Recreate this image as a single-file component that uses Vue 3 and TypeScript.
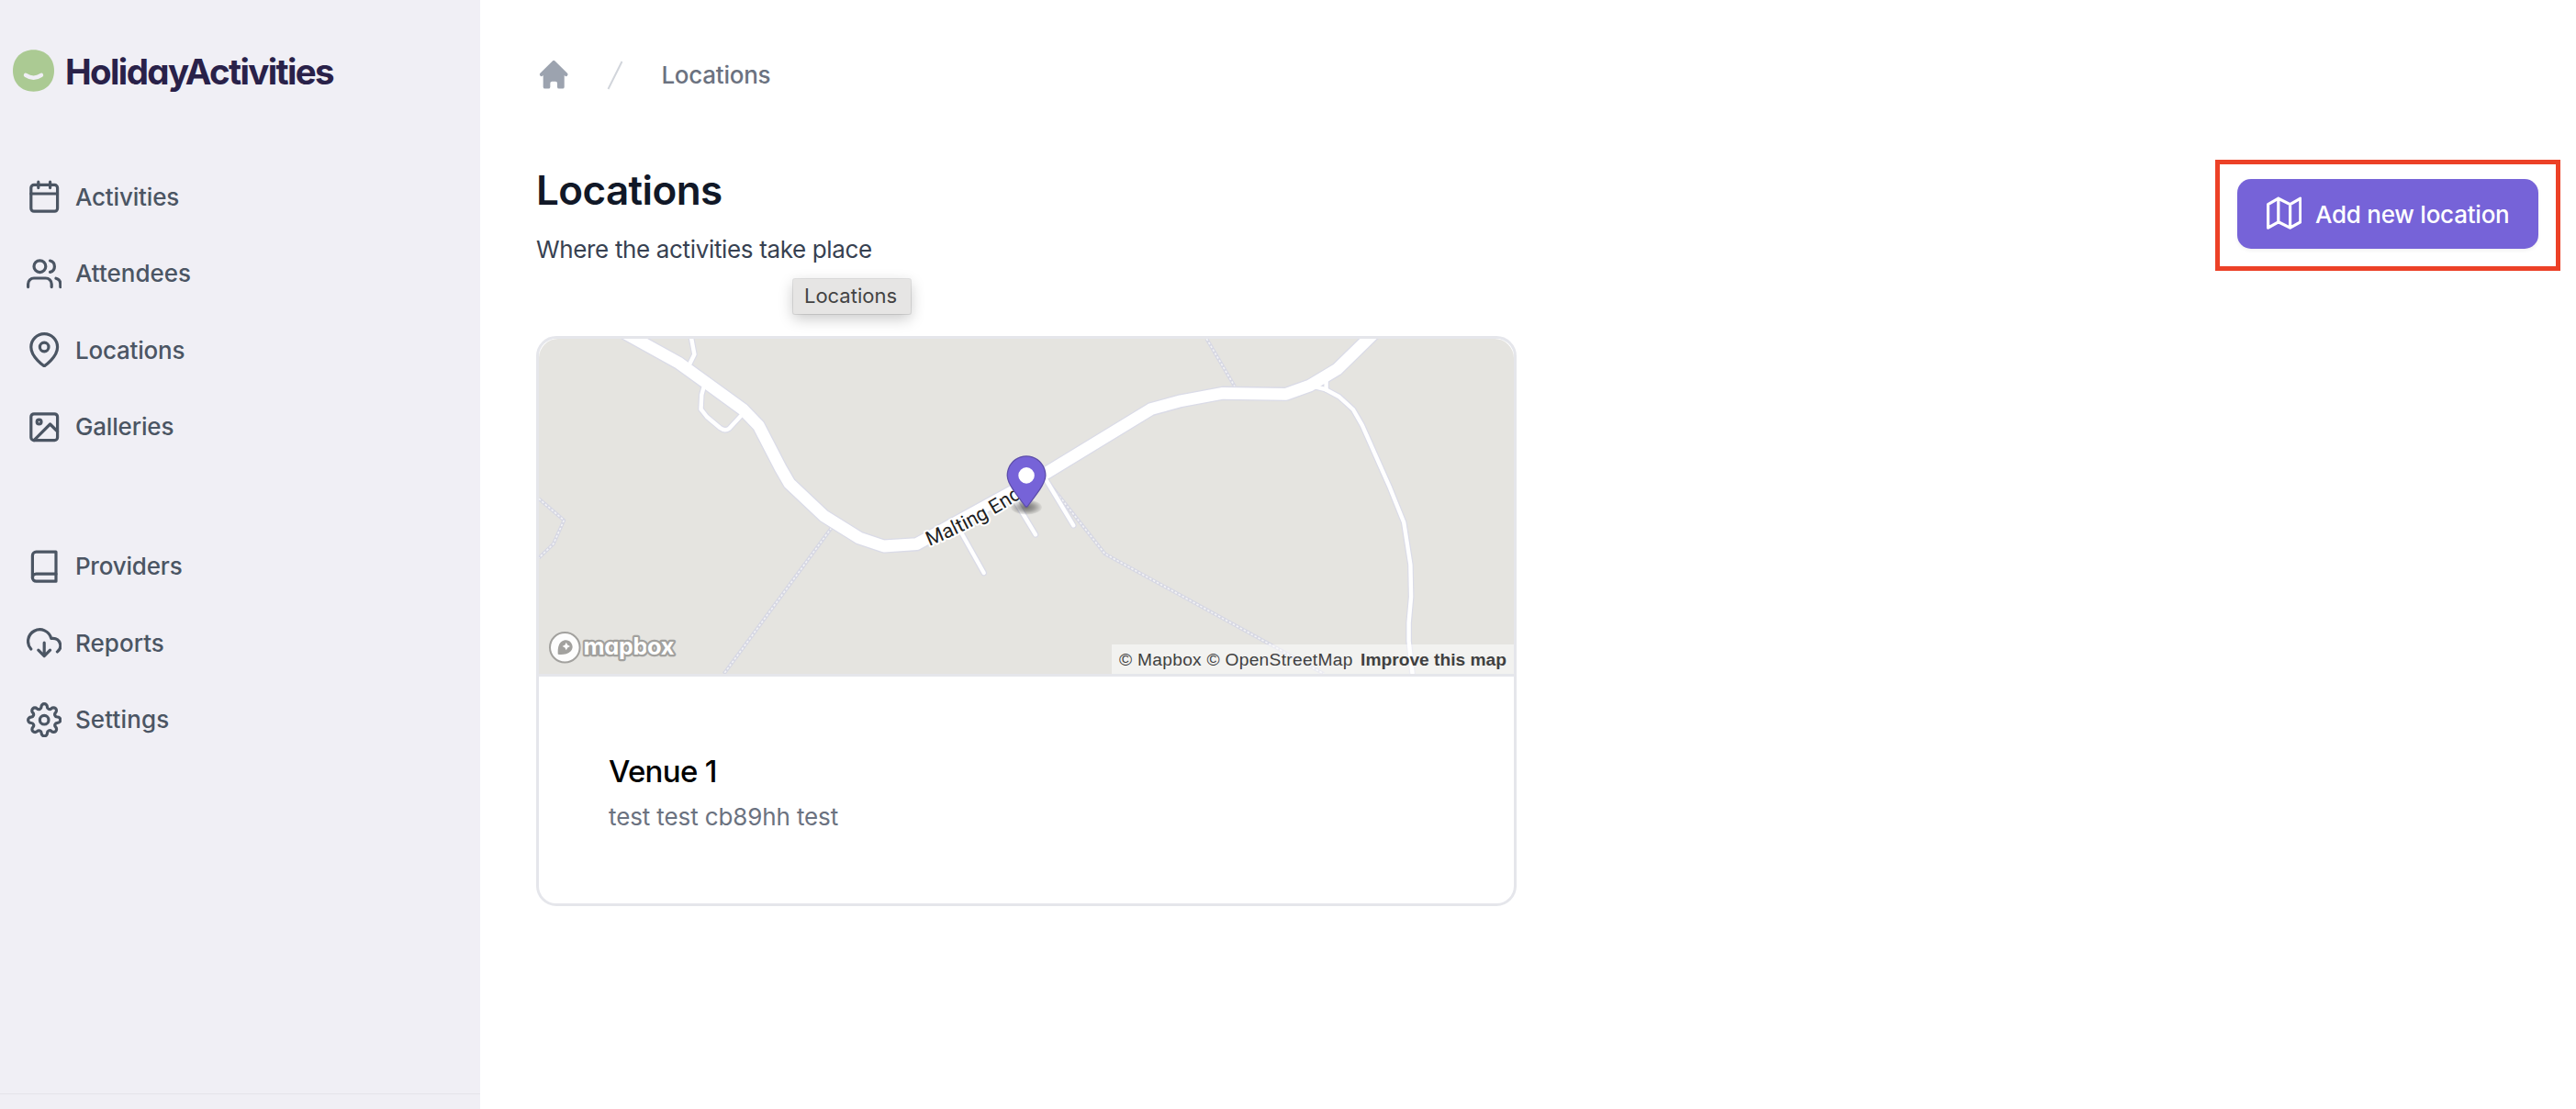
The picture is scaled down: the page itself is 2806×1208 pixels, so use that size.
<script setup lang="ts">
interface NavItem {
  label: string
  icon: string
  spacing: number
}

const mainNav: NavItem[] = [
  {
    label: 'Activities',
    spacing: -0.15,
    icon: '<rect x="3" y="4" width="18" height="18" rx="2"/><path d="M16 2v4M8 2v4M3 10h18"/>',
  },
  {
    label: 'Attendees',
    spacing: 0,
    icon: '<path d="M17 21v-2a4 4 0 0 0-4-4H5a4 4 0 0 0-4 4v2"/><circle cx="9" cy="7" r="4"/><path d="M23 21v-2a4 4 0 0 0-3-3.87M16 3.13a4 4 0 0 1 0 7.75"/>',
  },
  {
    label: 'Locations',
    spacing: -0.2,
    icon: '<path d="M21 10c0 7-9 13-9 13s-9-6-9-13a9 9 0 0 1 18 0z"/><circle cx="12" cy="10" r="3"/>',
  },
  {
    label: 'Galleries',
    spacing: -0.15,
    icon: '<rect x="3" y="3" width="18" height="18" rx="2"/><circle cx="8.5" cy="8.5" r="1.5"/><path d="M21 15l-5-5L5 21"/>',
  },
]

const adminNav: NavItem[] = [
  {
    label: 'Providers',
    spacing: -0.2,
    icon: '<path d="M4 19.5A2.5 2.5 0 0 1 6.5 17H20"/><path d="M6.5 2H20v20H6.5A2.5 2.5 0 0 1 4 19.5v-15A2.5 2.5 0 0 1 6.5 2z"/>',
  },
  {
    label: 'Reports',
    spacing: 0.05,
    icon: '<path d="M8 17l4 4 4-4M12 12v9"/><path d="M20.88 18.09A5 5 0 0 0 18 9h-1.26A8 8 0 1 0 3 16.29"/>',
  },
  {
    label: 'Settings',
    spacing: 0.15,
    icon: '<circle cx="12" cy="12" r="3"/><path d="M19.4 15a1.65 1.65 0 0 0 .33 1.82l.06.06a2 2 0 0 1 0 2.83 2 2 0 0 1-2.83 0l-.06-.06a1.65 1.65 0 0 0-1.82-.33 1.65 1.65 0 0 0-1 1.51V21a2 2 0 0 1-2 2 2 2 0 0 1-2-2v-.09A1.65 1.65 0 0 0 9 19.4a1.65 1.65 0 0 0-1.82.33l-.06.06a2 2 0 0 1-2.83 0 2 2 0 0 1 0-2.83l.06-.06a1.65 1.65 0 0 0 .33-1.82 1.65 1.65 0 0 0-1.51-1H3a2 2 0 0 1-2-2 2 2 0 0 1 2-2h.09A1.65 1.65 0 0 0 4.6 9a1.65 1.65 0 0 0-.33-1.82l-.06-.06a2 2 0 0 1 0-2.83 2 2 0 0 1 2.83 0l.06.06a1.65 1.65 0 0 0 1.82.33H9a1.65 1.65 0 0 0 1-1.51V3a2 2 0 0 1 2-2 2 2 0 0 1 2 2v.09a1.65 1.65 0 0 0 1 1.51 1.65 1.65 0 0 0 1.82-.33l.06-.06a2 2 0 0 1 2.83 0 2 2 0 0 1 0 2.83l-.06.06a1.65 1.65 0 0 0-.33 1.82V9a1.65 1.65 0 0 0 1.51 1H21a2 2 0 0 1 2 2 2 2 0 0 1-2 2h-.09a1.65 1.65 0 0 0-1.51 1z"/>',
  },
]

const navGroups: NavItem[][] = [mainNav, adminNav]

const lanes: string[] = [
  'M166.2 -3V0L169.4 17L163 30',
  'M179.5 53L177.3 61L176.5 76.7L183 85L197.3 97Q202.6 101 207.3 97.7L220 84',
  'M458 207.5L484.7 255',
  'M516 172L541 213.3',
  'M552 153L582.3 203.3',
  'M840 52L846.9 52.7L856.5 55L871.9 63.3L886.9 77L896.9 94.3L927.2 162.7L942.2 200L949.4 246L950.1 281L947.6 309.3V329.3L951.9 368',
  'M857.6 42V55.5',
]

const footpaths: string[] = [
  'M318.7 206L201.5 365',
  'M0 174.3L27.3 197.7L15.9 223.3L0 238.7',
  'M727.3 0L758 52',
  'M555.9 157.7L616.6 234.3L855 365',
]

const mainRoad =
  'M86.8 -10L153 26.7L222.3 77L239.4 94.7L263.3 141L273 157.7L310.1 192.7L349 217L375.8 226L411.5 223.7L553 146L666.6 76.7L699.4 67.7L745 59.3L814 60.3L839.8 51L869.4 33.3L913.7 -10'
</script>

<template>
  <div class="app">
    <aside class="sidebar">
      <div class="brand">
        <svg class="brand-mark" viewBox="0 0 45 46">
          <path d="M22.5 .2C36 .2 45 9.500 45 23S36 45.700 22.500 45.700S0 36.500 0 23S9 .2 22.500 .2Z" fill="#abca93" />
          <path d="M14 27.800Q22.500 33.500 31 27.800" fill="none" stroke="#f0eff5" stroke-width="4.400" stroke-linecap="round" />
        </svg>
        <span class="brand-name">HolidayActivities</span>
      </div>
      <nav class="nav">
        <ul v-for="(group, index) in navGroups" :key="index" class="nav-group">
          <li v-for="item in group" :key="item.label" class="nav-item">
            <svg class="nav-icon" viewBox="0 0 24 24" v-html="item.icon"></svg>
            <span :style="{ letterSpacing: item.spacing + 'px' }">{{ item.label }}</span>
          </li>
        </ul>
      </nav>
      <div class="sidebar-footer"></div>
    </aside>

    <main class="content">
      <nav class="breadcrumb">
        <svg class="home" viewBox="0 0 20 20">
          <path d="M10.707 2.293a1 1 0 0 0-1.414 0l-7 7a1 1 0 0 0 1.414 1.414L4 10.414V17a1 1 0 0 0 1 1h2a1 1 0 0 0 1-1v-2a1 1 0 0 1 1-1h2a1 1 0 0 1 1 1v2a1 1 0 0 0 1 1h2a1 1 0 0 0 1-1v-6.586l.293.293a1 1 0 0 0 1.414-1.414l-7-7z" />
        </svg>
        <svg class="slash" viewBox="0 0 20 34"><path d="M2.500 32L17.500 2" /></svg>
        <span class="crumb">Locations</span>
      </nav>

      <header class="page-header">
        <div class="heading">
          <h1>Locations</h1>
          <p>Where the activities take place</p>
          <div class="tooltip">Locations</div>
        </div>
        <div class="highlight">
          <button class="add-button" type="button">
            <svg class="nav-icon" viewBox="0 0 24 24">
              <path d="M1 6v16l7-4 8 4 7-4V2l-7 4-8-4-7 4zM8 2v16M16 6v16" />
            </svg>
            <span>Add new location</span>
          </button>
        </div>
      </header>

      <article class="card">
        <div class="map">
          <svg class="map-canvas" viewBox="0 0 1062 365">
            <defs>
              <radialGradient id="pin-shadow">
                <stop offset="0" stop-opacity=".5" />
                <stop offset=".5" stop-opacity=".32" />
                <stop offset="1" stop-opacity="0.04" />
              </radialGradient>
              <path id="label-line" d="M425 226Q456 213.500 482 199Q505 187 545 161" />
            </defs>
            <g class="footpaths">
              <path v-for="d in footpaths" :key="d" :d="d" class="path-casing" />
              <path v-for="d in footpaths" :key="d + 'dots'" :d="d" class="path-dots" />
            </g>
            <path v-for="d in lanes" :key="d" :d="d" class="lane-casing" />
            <path :d="mainRoad" class="road-casing" />
            <path v-for="d in lanes" :key="d + 'fill'" :d="d" class="lane" />
            <path :d="mainRoad" class="road" />
            <text class="road-label"><textPath href="#label-line">Malting End</textPath></text>
            <ellipse cx="531" cy="183.500" rx="17" ry="8.300" fill="url(#pin-shadow)" />
            <g transform="translate(509.600 127.300) scale(1.59 1.6)">
              <path
                d="M27 13.500C27 19.070 20.250 27 14.750 34.500C14.020 35.500 12.980 35.500 12.250 34.500C6.750 27 0 19.220 0 13.500C0 6.040 6.040 0 13.500 0C20.960 0 27 6.040 27 13.500Z"
                fill="#5d4eaa"
              />
              <path
                d="M26.200 13.500C26.200 18.700 19.600 26.500 14.200 33.900C13.800 34.500 13.200 34.500 12.800 33.900C7.400 26.500 .8 18.800 .8 13.500C.8 6.500 6.500 .8 13.500 .8C20.500 .8 26.200 6.500 26.200 13.500Z"
                fill="#7663d8"
              />
              <circle cx="13.500" cy="13.500" r="5.500" fill="#fff" />
            </g>
            <g transform="translate(28.300 336.300)">
              <circle r="16.300" fill="#fdfdfd" stroke="#a2a19e" stroke-width="2" />
              <path d="M-7.500 7.500C-8 2 -7.500 -8 1.500 -8A7.300 7.300 0 0 1 6.500 4C3 7.800 -3 8 -7.500 7.500Z" fill="#a2a19e" />
              <path d="M1.500 -5.500L2.900 -2.700L5.700 -1.300L2.900 .1L1.500 2.900L.1 .1L-2.700 -1.300L.1 -2.700Z" fill="#fff" />
            </g>
            <text class="map-brand" x="48.500" y="344" textLength="99">mapbox</text>
          </svg>
          <div class="attribution">
            <span>© Mapbox</span>
            <span>© OpenStreetMap</span>
            <strong>Improve this map</strong>
          </div>
        </div>
        <div class="venue">
          <h2>Venue 1</h2>
          <p>test test cb89hh test</p>
        </div>
      </article>
    </main>
  </div>
</template>

<style>
body {
  background: #fff;
}
</style>

<style scoped>
.app {
  display: flex;
  width: 100vw;
  height: 100vh;
  overflow: hidden;
  font-family: Inter, sans-serif;
  font-size: 26px;
}

h1,
h2,
p,
ul {
  margin: 0;
  padding: 0;
}

.sidebar {
  display: flex;
  flex: none;
  flex-direction: column;
  box-sizing: border-box;
  width: 523px;
  padding-top: 53px;
  background: #f0eff5;
}

.brand {
  display: flex;
  align-items: center;
  gap: 12px;
  height: 47px;
  padding-left: 14px;
}

.brand-mark {
  width: 45px;
  height: 46px;
}

.brand-name {
  padding-top: 3px;
  color: #292149;
  font-size: 38.5px;
  font-weight: 700;
  font-feature-settings: 'cv11';
  letter-spacing: -1.65px;
  white-space: nowrap;
}

.nav {
  flex: 1;
  padding-top: 72.500px;
}

.nav-group {
  margin-bottom: 68.500px;
  list-style: none;
}

.nav-item {
  display: flex;
  align-items: center;
  gap: 14.500px;
  height: 83.500px;
  padding-left: 29px;
  color: #4b5563;
  font-weight: 500;
}

.nav-icon {
  flex: none;
  width: 38.400px;
  height: 38.400px;
  fill: none;
  stroke: currentColor;
  stroke-width: 2;
  stroke-linecap: round;
  stroke-linejoin: round;
}

.sidebar-footer {
  height: 16px;
  border-top: 1px solid #e4e4ea;
}

.content {
  flex: 1;
  min-width: 0;
  padding: 62px 17px 0 61px;
}

.breadcrumb {
  display: flex;
  align-items: center;
  height: 39px;
}

.home {
  width: 38.400px;
  height: 38.400px;
  fill: #9ca3af;
}

.slash {
  width: 20px;
  height: 34px;
  margin-left: 38px;
  fill: none;
  stroke: #d1d5db;
  stroke-width: 2;
}

.crumb {
  margin-left: 40px;
  color: #6b7280;
  font-weight: 500;
  letter-spacing: -0.25px;
}

.page-header {
  display: flex;
  justify-content: space-between;
  height: 192px;
  margin-top: 73px;
}

.heading {
  position: relative;
}

h1 {
  height: 66px;
  color: #111827;
  font-size: 44px;
  font-weight: 600;
  line-height: 66px;
  letter-spacing: -0.6px;
}

.heading p {
  height: 64px;
  color: #374151;
  line-height: 64px;
  letter-spacing: -0.35px;
  white-space: nowrap;
}

.tooltip {
  position: absolute;
  top: 130px;
  left: 280px;
  box-sizing: border-box;
  width: 128px;
  height: 38px;
  padding-right: 3px;
  border-radius: 2px;
  background: #e6e5e4;
  box-shadow: 0 0 0 1px rgba(0, 0, 0, 0.1), 0 5px 16px rgba(0, 0, 0, 0.22);
  color: #434343;
  font-size: 22px;
  line-height: 37px;
  text-align: center;
}

.highlight {
  box-sizing: border-box;
  width: 376px;
  height: 121px;
  padding: 16px 19px;
  border: 5px solid #ec4127;
}

.add-button {
  display: flex;
  align-items: center;
  gap: 15px;
  box-sizing: border-box;
  width: 328px;
  height: 76px;
  padding: 0 0 1px 31.500px;
  border: 0;
  border-radius: 15px;
  background: #7663d8;
  box-shadow: 0 2px 4px rgba(0, 0, 0, 0.06);
  color: #fff;
  font: 500 26px Inter, sans-serif;
  letter-spacing: -0.23px;
  white-space: nowrap;
}

.add-button span {
  padding-top: 2px;
}

.card {
  box-sizing: border-box;
  width: 1068px;
  height: 621px;
  border: 3px solid #e5e6eb;
  border-radius: 22px;
}

.map {
  display: flex;
  flex-direction: column;
  position: relative;
  height: 365px;
  overflow: hidden;
  border-bottom: 3px solid #e5e6eb;
  border-radius: 21px 21px 0 0;
  background: #e5e4e0;
}

.map-canvas {
  display: block;
  flex: none;
  width: 1062px;
  height: 365px;
}

.map-canvas path {
  stroke-linejoin: round;
}

.path-casing,
.path-dots,
.lane-casing,
.lane,
.road-casing,
.road {
  fill: none;
}

.path-casing {
  stroke: #d6d7e3;
  stroke-width: 3.8;
}

.path-dots {
  stroke: #f4f4f6;
  stroke-width: 1.6;
  stroke-dasharray: 2.5 2;
}

.lane-casing {
  stroke: #dadbe7;
  stroke-width: 6.8;
  stroke-linecap: round;
}

.lane {
  stroke: #fff;
  stroke-width: 4.4;
  stroke-linecap: round;
}

.road-casing {
  stroke: #dadbe7;
  stroke-width: 15.4;
}

.road {
  stroke: #fff;
  stroke-width: 12.8;
}

.road-label {
  fill: #1f1f1f;
  stroke: #fff;
  stroke-width: 4px;
  stroke-linejoin: round;
  paint-order: stroke;
  font-family: Roboto, sans-serif;
  font-size: 21.800px;
  letter-spacing: 0.05px;
}

.map-brand {
  fill: #fff;
  stroke: #a2a19e;
  stroke-width: 4.500px;
  stroke-linejoin: round;
  paint-order: stroke;
  font-size: 25.500px;
  font-weight: 700;
  font-feature-settings: 'cv11';
}

.attribution {
  position: absolute;
  right: 0;
  bottom: 0;
  display: flex;
  align-items: center;
  box-sizing: border-box;
  width: 438px;
  height: 32px;
  padding-top: 1px;
  padding-left: 8px;
  background: rgba(255, 255, 255, 0.5);
  color: #404040;
  font-family: 'Liberation Sans', sans-serif;
  font-size: 19.200px;
  white-space: nowrap;
}

.attribution span {
  margin-right: 5.500px;
  letter-spacing: 0.28px;
}

.attribution strong {
  margin-left: 3px;
}

.venue {
  padding: 79px 76px 0;
}

h2 {
  height: 50px;
  color: #000;
  font-size: 33px;
  font-weight: 500;
  line-height: 48px;
  letter-spacing: -0.7px;
}

.venue p {
  height: 48px;
  color: #6b7280;
  line-height: 48px;
  letter-spacing: -0.12px;
}
</style>
